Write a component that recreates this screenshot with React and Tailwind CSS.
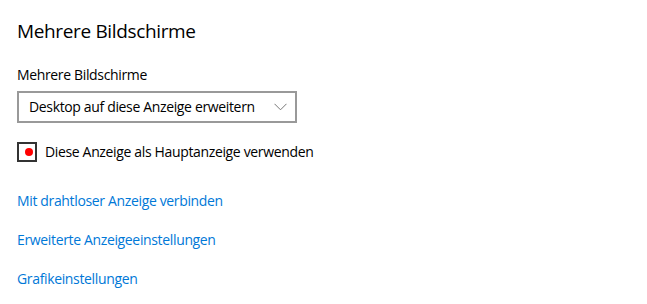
export default function App() {
  return (
    <div className="w-[647px] h-[304px] bg-white overflow-hidden pl-[17px] pt-[17px]" style={{ fontFamily: '"Open Sans", "Noto Sans", sans-serif' }}>
      <h1 className="text-[19px] leading-[28px] tracking-[-0.35px] text-black font-normal">Mehrere Bildschirme</h1>
      <div className="mt-[20px] text-[14px] leading-[20px] tracking-[-0.35px] text-black">Mehrere Bildschirme</div>
      <div className="mt-[6px] w-[280px] h-[32px] border-2 border-[#999999] flex items-center justify-between pl-[10px] pr-[8px]">
        <span className="text-[14px] leading-[20px] tracking-[-0.35px] text-black">Desktop auf diese Anzeige erweitern</span>
        <svg width="13" height="8" viewBox="0 0 13 8" fill="none">
          <path d="M0.5 0.8 L6.5 6.8 L12.5 0.8" stroke="#777" strokeWidth="1" />
        </svg>
      </div>
      <div className="mt-[19px] flex items-center gap-[8px]">
        <div className="w-[20px] h-[20px] border-2 border-[#333333] flex items-center justify-center">
          <div className="ml-[3px] w-[8px] h-[8px] rounded-full bg-[#ff0000]" />
        </div>
        <span className="text-[14px] leading-[20px] tracking-[-0.35px] text-black">Diese Anzeige als Hauptanzeige verwenden</span>
      </div>
      <div className="mt-[29px] flex flex-col gap-[19px] text-[14px] leading-[20px] tracking-[-0.35px] text-[#0078d7]">
        <span>Mit drahtloser Anzeige verbinden</span>
        <span>Erweiterte Anzeigeeinstellungen</span>
        <span>Grafikeinstellungen</span>
      </div>
    </div>
  );
}
